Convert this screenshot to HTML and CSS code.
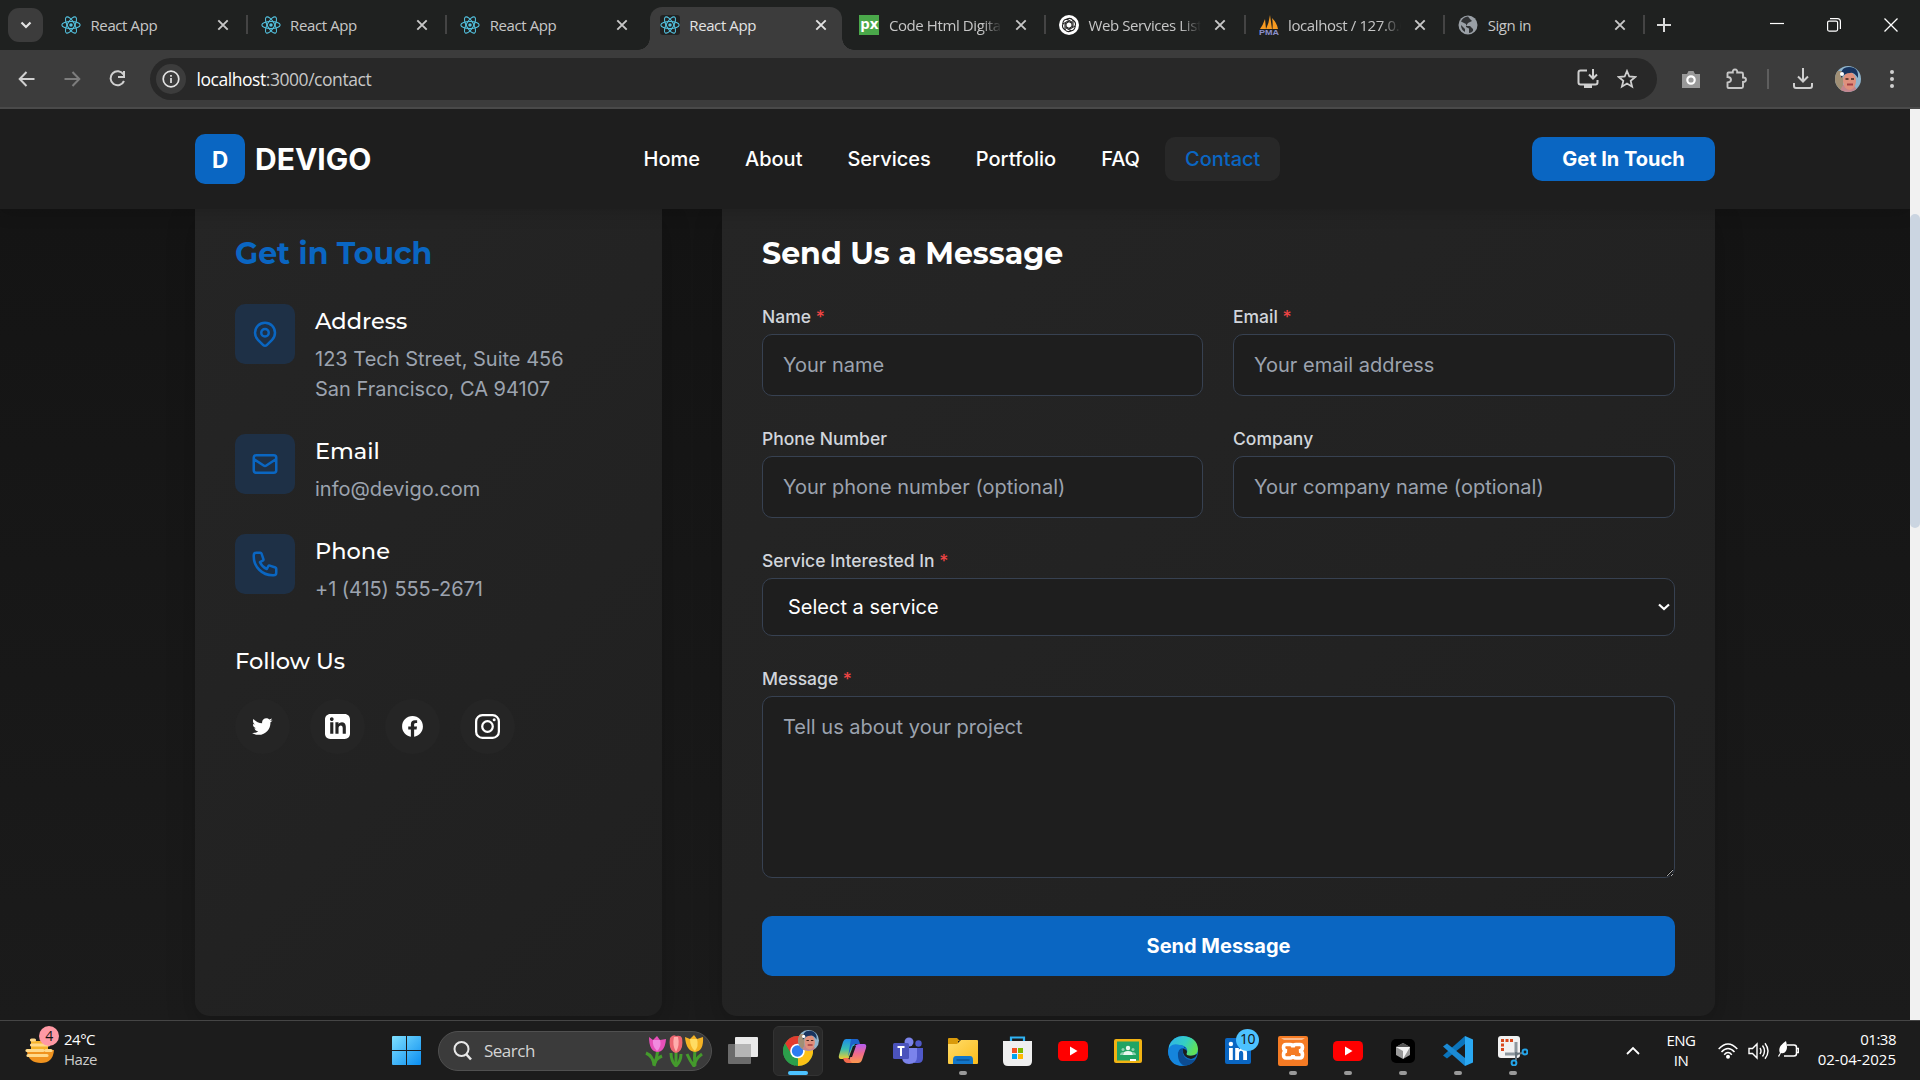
FILE: index.html
```html
<!DOCTYPE html>
<html lang="en">
<head>
<meta charset="utf-8">
<title>Devigo - Contact</title>
<link rel="stylesheet" href="styles.css">
</head>
<body>
<svg class="defs" width="0" height="0">
  <defs>
    <symbol id="react" viewBox="-12 -12 24 24"><g fill="none" stroke="#53c1de" stroke-width="1.3"><ellipse rx="11" ry="4.3"/><ellipse rx="11" ry="4.3" transform="rotate(60)"/><ellipse rx="11" ry="4.3" transform="rotate(120)"/></g><circle r="2.1" fill="#53c1de"/></symbol>
    <symbol id="close" viewBox="0 0 12 12"><path d="M1.3 1.3l9.4 9.4M10.7 1.3l-9.4 9.4" stroke="currentColor" stroke-width="1.9" fill="none"/></symbol>
    <symbol id="youtube" viewBox="0 0 30 20"><rect width="30" height="20" rx="4.5" fill="#f00"/><path d="M12 5.5v9l7.500-4.500z" fill="#fff"/></symbol>
    <linearGradient id="win" x1="0" y1="0" x2="1" y2="1"><stop offset="0" stop-color="#7fe0ff"/><stop offset="1" stop-color="#0a8df0"/></linearGradient>
    <linearGradient id="folder" x1="0" y1="0" x2="1" y2="1"><stop offset="0" stop-color="#ffdc6a"/><stop offset="1" stop-color="#fbbc1b"/></linearGradient>
    <linearGradient id="edgeTop" x1="0" y1="0" x2="1" y2=".4"><stop offset="0" stop-color="#2fb1ee"/><stop offset=".6" stop-color="#35cfc2"/><stop offset="1" stop-color="#5fe05a"/></linearGradient>
    <linearGradient id="copA" x1="0" y1="0" x2="0" y2="1"><stop offset="0" stop-color="#1d8bea"/><stop offset=".5" stop-color="#37bdb1"/><stop offset="1" stop-color="#f2cf2d"/></linearGradient>
    <linearGradient id="copB" x1="0" y1="0" x2="0" y2="1"><stop offset="0" stop-color="#b45cf2"/><stop offset=".5" stop-color="#f06a8c"/><stop offset="1" stop-color="#fb9a4c"/></linearGradient>
    <symbol id="face" viewBox="0 0 26 26"><clipPath id="fc"><circle cx="13" cy="13" r="13"/></clipPath><g clip-path="url(#fc)"><rect width="26" height="26" fill="#8fb4cc"/><path d="M0 5h8v21H0z" fill="#a08f75"/><path d="M5 26q2-9 8-9t10 9z" fill="#c4868e"/><ellipse cx="14.500" cy="15" rx="6.500" ry="9" fill="#e0907c"/><path d="M6 12Q5 1 14 1q10 0 9 11-4-6-8-5-5 0-9 5z" fill="#18345f"/><path d="M10.500 13h3M16 13h3" stroke="#40251f" stroke-width="1.500"/><path d="M12 18.500h6" stroke="#a33e42" stroke-width="2"/><circle cx="7" cy="8" r="2" fill="#fff"/></g></symbol>
  </defs>
</svg>

<div class="tabstrip">
  <button class="tab-search"><svg width="12" height="8" viewBox="0 0 12 8"><path d="M1.500 1.500L6 6l4.500-4.500" fill="none" stroke="#e3e3e3" stroke-width="2.200"/></svg></button>
  <div class="tabs">
    <div class="tab"><svg class="fav"><use href="#react"/></svg><span class="tab-title">React App</span><svg class="x"><use href="#close"/></svg></div>
    <div class="tab"><svg class="fav"><use href="#react"/></svg><span class="tab-title">React App</span><svg class="x"><use href="#close"/></svg></div>
    <div class="tab no-sep"><svg class="fav"><use href="#react"/></svg><span class="tab-title">React App</span><svg class="x"><use href="#close"/></svg></div>
    <div class="tab active"><svg class="fav fav-dark"><use href="#react"/></svg><span class="tab-title">React App</span><svg class="x"><use href="#close"/></svg></div>
    <div class="tab"><span class="fav px">px</span><span class="tab-title fade">Code Html Digital</span><svg class="x"><use href="#close"/></svg></div>
    <div class="tab"><svg class="fav" viewBox="-10 -10 20 20"><circle r="10" fill="#fff"/><g fill="none" stroke="#222" stroke-width="1.100"><path id="pt" d="M-2.500-5.800Q2-8 4-4.500V1L0 3.500"/><use href="#pt" transform="rotate(60)"/><use href="#pt" transform="rotate(120)"/><use href="#pt" transform="rotate(180)"/><use href="#pt" transform="rotate(240)"/><use href="#pt" transform="rotate(300)"/></g></svg><span class="tab-title fade">Web Services List</span><svg class="x"><use href="#close"/></svg></div>
    <div class="tab"><svg class="fav" viewBox="0 0 20 20"><path d="M1 14Q4 10 6 4l1 10zM7 14Q10 8 11 0l2 14zM13.500 14Q14 7 13 3q5 5 6 11z" fill="#f79a20"/><text x="0" y="20" font-size="7.500" font-weight="700" textLength="20" lengthAdjust="spacingAndGlyphs" fill="#8b8fc9" font-family="Liberation Sans, sans-serif">PMA</text></svg><span class="tab-title fade">localhost / 127.0.0.1</span><svg class="x"><use href="#close"/></svg></div>
    <div class="tab"><svg class="fav" viewBox="0 0 20 20"><circle cx="10" cy="10" r="9.500" fill="#9aa0a6"/><path d="M10 1.500Q5 2 3 6.500l5 2.500v3l3 1.500V18q5-1 4-4l-3-3H8l2-3 4-2-2-2z" fill="#303234"/><path d="M3 10l4 4v3q-4-2-4-7z" fill="#303234"/></svg><span class="tab-title">Sign in</span><svg class="x"><use href="#close"/></svg></div>
  </div>
  <svg class="plus" width="14" height="14" viewBox="0 0 14 14"><path d="M7 0v14M0 7h14" stroke="#dadada" stroke-width="2"/></svg>
  <div class="window-buttons">
    <svg width="14" height="16" viewBox="0 0 14 16"><path d="M0 6.500h14" stroke="#fff" stroke-width="1.200"/></svg>
    <svg width="14" height="14" viewBox="0 0 14 14"><rect x=".6" y="3.100" width="10" height="10" rx="1.500" fill="none" stroke="#fff" stroke-width="1.200"/><path d="M3 .6h7.400q3 0 3 3V11" fill="none" stroke="#fff" stroke-width="1.200"/></svg>
    <svg width="14" height="14" viewBox="0 0 14 14"><path d="M.5.5l13 13M13.500.5l-13 13" stroke="#fff" stroke-width="1.300"/></svg>
  </div>
</div>

<div class="toolbar">
  <div class="nav-buttons">
    <svg width="20" height="20" viewBox="0 0 20 20"><path d="M17.500 10H3M9.500 3L2.700 10l6.800 7" fill="none" stroke="#d0d0d0" stroke-width="2"/></svg>
    <svg width="20" height="20" viewBox="0 0 20 20"><path d="M2.500 10H17M10.500 3l6.800 7-6.800 7" fill="none" stroke="#7d7d7d" stroke-width="2"/></svg>
    <svg width="20" height="20" viewBox="0 0 20 20"><path d="M16.500 5.500A7 7 0 1 0 17 12" fill="none" stroke="#d0d0d0" stroke-width="2"/><path d="M17 2v6h-6" fill="none" stroke="#d0d0d0" stroke-width="2"/></svg>
  </div>
  <div class="omnibox">
    <span class="site-info"><svg width="18" height="18" viewBox="0 0 18 18"><circle cx="9" cy="9" r="7.800" fill="none" stroke="#e3e3e3" stroke-width="1.700"/><path d="M9 8v5M9 5v1.700" stroke="#e3e3e3" stroke-width="1.700"/></svg></span>
    <span class="url"><b>localhost</b>:3000/contact</span>
    <svg width="22" height="20" viewBox="0 0 22 20"><path d="M10 1.500H3.500Q1.500 1.500 1.500 3.500v10q0 2 2 2h15q2 0 2-2V11M16 0v9M12 5.500l4 4 4-4" fill="none" stroke="#cfcfcf" stroke-width="2"/><path d="M7 16h8v3H7z" fill="#cfcfcf"/></svg>
    <svg width="20" height="20" viewBox="0 0 20 20"><path d="M10 2l2.300 5.500 5.900.5-4.500 3.900 1.400 5.800L10 14.600l-5.100 3.100 1.400-5.800L1.800 8l5.900-.5z" fill="none" stroke="#cfcfcf" stroke-width="1.800"/></svg>
  </div>
  <div class="extensions">
    <svg class="cam" width="20" height="18" viewBox="0 0 20 18"><path d="M1 4h5l1.500-3h5L14 4h5v14H1z" fill="#999"/><circle cx="10" cy="10" r="3.700" fill="none" stroke="#fff" stroke-width="2.200"/></svg>
    <svg class="puzzle" width="22" height="22" viewBox="0 0 22 22"><path d="M3.500 4.500h4.300q-.3-3 2.200-3t2.200 3h4.300q1.500 0 1.500 1.500v3.500q3 0 3 2.200t-3 2.300v4.500q0 1.500-1.500 1.500h-13q-1 0-1-1v-4.500q3.500-.3 3.500-2.800T2.500 9V5.500q0-1 1-1z" fill="none" stroke="#c7c7c7" stroke-width="1.900"/></svg>
    <i></i>
    <svg class="dl" width="20" height="21" viewBox="0 0 20 21"><path d="M10 0v13M5 8.500l5 5 5-5M1 15v3q0 2 2 2h14q2 0 2-2v-3" fill="none" stroke="#cfcfcf" stroke-width="2"/></svg>
    <svg class="avatar" width="26" height="26"><use href="#face"/></svg>
    <svg class="dots" width="4" height="18" viewBox="0 0 4 18"><g fill="#cfcfcf"><circle cx="2" cy="2" r="2"/><circle cx="2" cy="9" r="2"/><circle cx="2" cy="16" r="2"/></g></svg>
  </div>
</div>

<div class="viewport">
  <div class="site">
    <header class="site-header">
      <div class="container header-row">
        <div class="brand"><span class="brand-mark">D</span><span class="brand-name">DEVIGO</span></div>
        <nav><a>Home</a><a>About</a><a>Services</a><a>Portfolio</a><a>FAQ</a><a class="current">Contact</a></nav>
        <button class="cta">Get In Touch</button>
      </div>
    </header>
    <main class="container columns">
      <section class="card info">
        <h2 class="blue">Get in Touch</h2>
        <div class="contact-item"><span class="icon-box"><svg viewBox="0 0 24 24"><path d="M17.657 16.657L13.414 20.900a1.998 1.998 0 01-2.827 0l-4.244-4.243a8 8 0 1111.314 0z"/><path d="M15 11a3 3 0 11-6 0 3 3 0 016 0z"/></svg></span><div><h3>Address</h3><p>123 Tech Street, Suite 456<br>San Francisco, CA 94107</p></div></div>
        <div class="contact-item"><span class="icon-box"><svg viewBox="0 0 24 24"><path d="M3 8l7.890 5.260a2 2 0 002.220 0L21 8M5 19h14a2 2 0 002-2V7a2 2 0 00-2-2H5a2 2 0 00-2 2v10a2 2 0 002 2z"/></svg></span><div><h3>Email</h3><p>info@devigo.com</p></div></div>
        <div class="contact-item"><span class="icon-box"><svg viewBox="0 0 24 24"><path d="M3 5a2 2 0 012-2h3.280a1 1 0 01.948.684l1.498 4.493a1 1 0 01-.502 1.210l-2.257 1.130a11.042 11.042 0 005.516 5.516l1.130-2.257a1 1 0 011.210-.502l4.493 1.498a1 1 0 01.684.949V19a2 2 0 01-2 2h-1C9.716 21 3 14.284 3 6V5z"/></svg></span><div><h3>Phone</h3><p class="tel">+1 (415) 555-2671</p></div></div>
        <h3 class="follow">Follow Us</h3>
        <div class="social">
          <a><svg viewBox="0 0 24 24"><path d="M19.633 7.997c.013.175.013.349.013.523 0 5.325-4.053 11.461-11.460 11.461-2.282 0-4.402-.661-6.186-1.809.324.037.636.05.973.05a8.070 8.070 0 0 0 5.001-1.721 4.036 4.036 0 0 1-3.767-2.793c.249.037.499.062.761.062.361 0 .724-.05 1.061-.137a4.027 4.027 0 0 1-3.230-3.953v-.05c.537.299 1.160.486 1.820.511a4.022 4.022 0 0 1-1.796-3.354c0-.748.199-1.434.548-2.032a11.457 11.457 0 0 0 8.306 4.215c-.062-.3-.1-.611-.1-.923a4.026 4.026 0 0 1 4.028-4.028c1.160 0 2.207.486 2.943 1.272a7.957 7.957 0 0 0 2.556-.973 4.020 4.020 0 0 1-1.771 2.220 8.073 8.073 0 0 0 2.319-.624 8.645 8.645 0 0 1-2.019 2.083z"/></svg></a>
          <a><svg viewBox="0 0 24 24"><path d="M19 0h-14c-2.761 0-5 2.239-5 5v14c0 2.761 2.239 5 5 5h14c2.762 0 5-2.239 5-5v-14c0-2.761-2.238-5-5-5zm-11 19h-3v-11h3v11zm-1.500-12.268c-.966 0-1.750-.79-1.750-1.764s.784-1.764 1.750-1.764 1.750.79 1.750 1.764-.783 1.764-1.750 1.764zm13.500 12.268h-3v-5.604c0-3.368-4-3.113-4 0v5.604h-3v-11h3v1.765c1.396-2.586 7-2.777 7 2.476v6.759z"/></svg></a>
          <a><svg viewBox="0 0 24 24"><path d="M12.001 2.002c-5.522 0-9.999 4.477-9.999 9.999 0 4.990 3.656 9.126 8.437 9.879v-6.988h-2.540v-2.891h2.540V9.798c0-2.508 1.493-3.891 3.776-3.891 1.094 0 2.240.195 2.240.195v2.459h-1.264c-1.240 0-1.628.772-1.628 1.563v1.875h2.771l-.443 2.891h-2.328v6.988C18.344 21.129 22 16.992 22 12.001c0-5.522-4.477-9.999-9.999-9.999z"/></svg></a>
          <a><svg viewBox="0 0 24 24"><rect x="1.080" y="1.080" width="21.840" height="21.840" rx="6" fill="none" stroke="#fff" stroke-width="2.160"/><circle cx="12" cy="12" r="5.080" fill="none" stroke="#fff" stroke-width="2.160"/><circle cx="18.400" cy="5.600" r="1.440"/></svg></a>
        </div>
      </section>
      <section class="card message">
        <h2>Send Us a Message</h2>
        <form>
          <div class="field"><label>Name <em>*</em></label><input placeholder="Your name"></div>
          <div class="field"><label>Email <em>*</em></label><input placeholder="Your email address"></div>
          <div class="field"><label>Phone Number</label><input placeholder="Your phone number (optional)"></div>
          <div class="field"><label>Company</label><input placeholder="Your company name (optional)"></div>
          <div class="field wide"><label>Service Interested In <em>*</em></label><div class="select"><span>Select a service</span><svg width="12" height="8" viewBox="0 0 12 8"><path d="M1 1.500l5 4.500 5-4.500" fill="none" stroke="#fff" stroke-width="2.200"/></svg></div></div>
          <div class="field wide last"><label>Message <em>*</em></label><textarea placeholder="Tell us about your project"></textarea></div>
          <button type="button" class="wide submit">Send Message</button>
        </form>
      </section>
    </main>
  </div>
  <div class="scrollbar"><div class="thumb"></div></div>
</div>

<div class="taskbar">
  <div class="weather">
    <svg width="34" height="38" viewBox="0 0 34 38"><path d="M3 22h27q-1 13-13 13T3 24z" fill="#f0931f"/><path d="M7 13h17v9H7z" fill="#f5b32c"/><g stroke="#ffd98a" stroke-width="3.200" stroke-linecap="round"><path d="M7.500 12h3M7.500 17h17M3 22.500h16M22 22.500h5M4 27.500h19"/></g><circle cx="25" cy="8" r="10" fill="#ff99a4"/><text x="25" y="13" text-anchor="middle" font-size="14" fill="#111" font-family="Open Sans, sans-serif">4</text></svg>
    <div><span>24°C</span><span class="dim">Haze</span></div>
  </div>
  <svg class="start" width="29" height="29" viewBox="0 0 29 29"><path d="M1 0h13v14H0V1q0-1 1-1zM15 0h13q1 0 1 1v13H15zM0 15h14v14H1q-1 0-1-1zM15 15h14v13q0 1-1 1H15z" fill="url(#win)"/></svg>
  <div class="search">
    <svg width="20" height="20" viewBox="0 0 20 20"><circle cx="8.500" cy="8" r="7" fill="none" stroke="#e8e8e8" stroke-width="2"/><path d="M13.500 13.500L18 18.500" stroke="#e8e8e8" stroke-width="2.600"/></svg>
    <span>Search</span>
    <svg width="60" height="32" viewBox="0 0 60 32"><g fill="none" stroke="#449a2c" stroke-width="3"><path d="M13 14q-1 9-4 17M31 14v17M50 14q-1 9 0 17"/><path d="M1 18q7 3 8 12 1-6 8-9M26 18q0 8 5 13 5-5 5-12M42 19q3 7 7 12 1-7 8-12"/></g><path d="M4 2l4 3 4-4 3 4 6-1q-1 13-9 13Q4 16 4 2z" fill="#e650b8"/><path d="M8 5q-1 6 4 11 5-4 3-11" fill="#f28be0"/><path d="M25 3q3-4 6-2 5-1 6 2 2 13-6 15-8-2-6-15z" fill="#ec6670"/><path d="M29 2q-2 8 2 15 4-7 2-15" fill="#ffadac"/><path d="M40 2l5 2 4-4 3 4 6-2q1 14-8 15-9-1-10-15z" fill="#f5b325"/><path d="M45 4q0 8 5 12 4-5 2-12" fill="#ffdc63"/></svg>
  </div>
  <div class="apps">
    <span><svg viewBox="0 0 30 30"><rect x="0" y="8" width="23" height="20" rx="1" fill="#6b6b6b"/><rect x="7" y="1" width="23" height="20" rx="1" fill="#e9e9e9"/><path d="M7 8h16v13H7z" fill="#b5b5b5"/></svg></span>
    <span class="open focus"><svg viewBox="0 0 30 30"><circle cx="15" cy="15" r="15" fill="#2c9e4b"/><path d="M15 15L2 7.500A15 15 0 0 1 28 7.500z" fill="#e33b2e"/><path d="M15 15L28 7.500A15 15 0 0 1 15 30z" fill="#fbc116"/><path d="M2 7.500L9 19l6-4z" fill="#2c9e4b"/><path d="M2 7.500L8 18 15 15V7z" fill="#e33b2e"/><path d="M2 7.500l7 11.500L15 22 12 29.700A15 15 0 0 1 2 7.500z" fill="#2c9e4b"/><circle cx="14.500" cy="15" r="7.300" fill="#fff"/><circle cx="14.500" cy="15" r="5.700" fill="#2e7cf0"/></svg><svg class="mini"><use href="#face"/></svg></span>
    <span><svg viewBox="0 0 30 30"><path d="M8 3h11L12 20q-1 3-4 3H3q-3 0-2-4L5 6q1-3 3-3z" fill="url(#copA)"/><path d="M13 3h6q2 0 3 5h-5q-3 0-4 4l-3 9z" fill="#1c63cc"/><path d="M22 8h4q3 0 2 4l-4 12q-1 3-4 3H10l6-15q1-4 6-4z" fill="url(#copB)"/><path d="M1 22h9l4 5h-4q-4 0-5-5z" fill="#f26b4d"/><path d="M15 10l-4 11h3l4-11z" fill="#1c1c1c"/></svg></span>
    <span><svg viewBox="0 0 30 30"><circle cx="16" cy="6" r="4.500" fill="#7b83eb"/><circle cx="25.500" cy="7.500" r="3.200" fill="#5059c9"/><path d="M20 12h10v10q0 5-5 5h-4z" fill="#5059c9"/><path d="M9 12h15v9q0 7-8 7-7 0-7-7z" fill="#7b83eb"/><rect x="0" y="7" width="16" height="16" rx="1.500" fill="#4b53bc"/><path d="M4.500 11h7M8 11v9" stroke="#fff" stroke-width="2"/></svg></span>
    <span class="open"><svg viewBox="0 0 30 30"><path d="M0 3q0-1 1-1h8l3 3h-2v8H0z" fill="#d99a0b"/><path d="M0 8h9l4-4h16q1 0 1 1v22q0 1-1 1H1q-1 0-1-1z" fill="url(#folder)"/><path d="M5 28v-4q0-4 3-4h14q3 0 3 4v4z" fill="#1276c9"/><path d="M8.500 24h13" stroke="#0b4a86" stroke-width="1.200"/></svg></span>
    <span><svg viewBox="0 0 30 30"><path d="M8 6V1.500h13V6" fill="none" stroke="#2fb2f2" stroke-width="2.200"/><path d="M0 5h29v20q0 5-5 5H5q-5 0-5-5z" fill="#efefef"/><path d="M9 12h5v5H9z" fill="#f25022"/><path d="M15 12h5v5h-5z" fill="#7fba00"/><path d="M9 18h5v5H9z" fill="#00a4ef"/><path d="M15 18h5v5h-5z" fill="#ffb900"/></svg></span>
    <span><svg><use href="#youtube"/></svg></span>
    <span><svg viewBox="0 0 30 30"><rect x="1" y="3" width="28" height="24" rx="2" fill="#f2b313"/><rect x="4" y="5.500" width="22" height="19" fill="#21a464"/><g fill="#e8f6ee"><circle cx="15" cy="12" r="2.200"/><path d="M10 19q0-4 5-4t5 4z"/></g><g fill="#8fd1b1"><circle cx="10" cy="13.500" r="1.500"/><circle cx="20" cy="13.500" r="1.500"/><path d="M7 19q0-3 4-3l-1 3zM23 19q0-3-4-3l1 3z"/></g><path d="M17 23h6v2h-6z" fill="#fff"/></svg></span>
    <span><svg viewBox="0 0 30 30"><circle cx="15" cy="15" r="15" fill="#0f6fc4"/><path d="M1 10Q5 0 15 0q14 1 15 13 0 7-8 7-5 0-4-2 2-2 1-5-2-4-8-4-7 0-10 5z" fill="url(#edgeTop)"/><path d="M10 17q1-7 8-6-4 2-3 7 2 6 9 6 3 0 4-1-5 8-13 6-6-4-5-12z" fill="#0c4c92"/><path d="M15 13q4 0 4 3-1 2 0 3 5 2 10-1-1 4-6 5-9-2-8-10z" fill="#1c1c1c"/><path d="M0 15q2-9 12-6 5 1 4 3-7 0-6 8 0 6 5 10Q1 30 0 15z" fill="#1585dc"/></svg></span>
    <span class="linkedin"><svg viewBox="0 0 30 30"><rect x="2" y="2" width="26" height="26" rx="2" fill="#0a66c2"/><path d="M6 12h3.800v12H6zM12.200 12h3.600v1.700Q17 11.700 19.700 11.700q4.300 0 4.300 5.300v7h-3.800v-6.500q0-2.700-2-2.700-2.200 0-2.200 2.900V24h-3.800z" fill="#fff"/><circle cx="7.900" cy="8" r="2.200" fill="#fff"/></svg><b>10</b></span>
    <span class="open"><svg viewBox="0 0 30 30"><rect width="30" height="30" rx="2" fill="#f57b24"/><path d="M3 2h24l-3 2H6z" fill="#fbb98a"/><path d="M8 8.500h4q3 0 3 3 0-3 3-3h4q2.500 0 2.500 3T21 15q3.500 0 3.500 3.500t-2.500 3.500h-4q-3 0-3-3 0 3-3 3H8q-2.500 0-2.500-3.500T9 15q-3.500-.5-3.500-3.500t2.500-3z" fill="none" stroke="#fff" stroke-width="3.600"/></svg></span>
    <span class="open"><svg><use href="#youtube"/></svg></span>
    <span class="open"><svg viewBox="0 0 30 30"><rect x="3" y="3" width="24" height="24" rx="5" fill="#000"/><path d="M15 7l7 4v8l-7 4-7-4v-8z" fill="#999"/><path d="M8 11h14l-7 12v-8z" fill="#f4f4f4"/><path d="M15 7l7 4H8z" fill="#555"/></svg></span>
    <span class="open"><svg viewBox="0 0 30 30"><path d="M22 0l8 3.500v23L22 30z" fill="#2aa8f2"/><path d="M22 0v8L4 22.500 0 19.500z" fill="#0b74bb"/><path d="M22 30v-8L4 7.500 0 10.500z" fill="#1b8ad4"/></svg></span>
    <span class="open"><svg viewBox="0 0 30 30"><rect x="0" y="0" width="22" height="22" rx="3" fill="#f1f1f1"/><path d="M4.500 15V4.500H15" fill="none" stroke="#d9481c" stroke-width="3" stroke-dasharray="3 1.500"/><path d="M18 6v12M7 18h13" stroke="#8d979e" stroke-width="3"/><path d="M18 16v8M18 18l7-1" stroke="#68747c" stroke-width="2"/><g fill="none" stroke="#24a4e8" stroke-width="2"><circle cx="27" cy="16" r="2.400"/><circle cx="16" cy="27" r="2.400"/></g></svg></span>
  </div>
  <div class="tray">
    <svg class="chev" width="14" height="9" viewBox="0 0 14 9"><path d="M1 8l6-6 6 6" fill="none" stroke="#fff" stroke-width="1.800"/></svg>
    <div class="lang"><span>ENG</span><span>IN</span></div>
    <svg class="wifi" width="20" height="16" viewBox="0 0 20 16"><g fill="none" stroke="#fff" stroke-width="1.500"><path d="M.7 6Q10-3.800 19.300 6"/><path d="M3.500 9Q10 2 16.500 9"/><path d="M6.200 11.700Q10 7.500 13.800 11.700"/></g><circle cx="10" cy="13.700" r="2" fill="#fff"/></svg>
    <svg class="vol" width="21" height="18" viewBox="0 0 21 18"><path d="M1 6.500h3.500L9 2v14l-4.500-4.500H1zM12 6q2 3 0 6M14.500 3.500q4 5.500 0 11M17 1.200q6 7.800 0 15.600" fill="none" stroke="#fff" stroke-width="1.400"/></svg>
    <svg class="bat" width="21" height="18" viewBox="0 0 21 18"><path d="M9 4h7q2.500 0 2.500 2.500v6q0 2.500-2.500 2.500H6M18.500 7.500h2v4h-2" fill="none" stroke="#fff" stroke-width="1.500"/><path d="M8 0q2 7 0 10-2 3-5 2l-2 4-1-1 2-3Q-1 6 8 0z" fill="#fff"/></svg>
    <div class="clock"><span>01:38</span><span class="date">02-04-2025</span></div>
  </div>
</div>
</body>
</html>
```
FILE: styles.css
```css
* { box-sizing: border-box; }
body {
  margin: 0;
  width: 1920px;
  height: 1080px;
  overflow: hidden;
  display: flex;
  flex-direction: column;
  background: #1c1c1c;
  font-family: Inter, sans-serif;
  color: #fff;
}
svg { display: block; flex: none; }
.defs { position: absolute; }
button { border: 0; font: inherit; color: inherit; padding: 0; }

/* Browser tab strip */
.tabstrip {
  flex: none;
  height: 50px;
  display: flex;
  align-items: center;
  background: #1f2120;
  font: 15px "Open Sans", sans-serif;
  color: #c7c7c7;
}
.tab-search {
  width: 35px;
  height: 34px;
  margin-left: 8px;
  border-radius: 11px;
  background: #3c3c3c;
  display: grid;
  place-items: center;
}
.tabs { display: flex; height: 50px; margin-left: 4px; }
.tab {
  width: 199.600px;
  height: 50px;
  padding: 0 17px 0 14px;
  display: flex;
  align-items: center;
  position: relative;
}
.tab::after {
  content: "";
  position: absolute;
  right: -1px;
  top: 15px;
  width: 2px;
  height: 19px;
  background: #444;
}
.no-sep::after { display: none; }
.active { color: #e3e3e3; }
.active::before {
  content: "";
  position: absolute;
  left: 4px;
  top: 7px;
  width: 192px;
  height: 43px;
  background: #3c3c3c;
  border-radius: 12px 12px 0 0;
}
/* Curved feet where the active tab meets the toolbar */
.active::after {
  left: -8px;
  right: auto;
  top: 38px;
  width: 216px;
  height: 12px;
  background:
    radial-gradient(circle at 0 0, transparent 11.5px, #3c3c3c 12px) left / 12px 12px no-repeat,
    radial-gradient(circle at 12px 0, transparent 11.5px, #3c3c3c 12px) right / 12px 12px no-repeat;
}
.active > * { position: relative; }
.fav { width: 20px; height: 20px; flex: none; }
.fav-dark { background: #222; border-radius: 3px; }
.px { background: #4aa84a; color: #fff; font: 700 15px/17px "Open Sans", sans-serif; text-align: center; }
.tab-title {
  width: 113px;
  margin: 0 13px 1px 9.500px;
  white-space: nowrap;
  overflow: hidden;
  letter-spacing: -.4px;
}
.fade { -webkit-mask-image: linear-gradient(to right, #000 82%, transparent); mask-image: linear-gradient(to right, #000 82%, transparent); }
.x { width: 12px; height: 12px; }
.plus { margin-left: 13px; }
.window-buttons { margin-left: auto; margin-right: 22px; display: flex; gap: 43px; align-items: center; }

/* Browser toolbar */
.toolbar {
  flex: none;
  height: 59px;
  display: flex;
  align-items: center;
  background: #3c3c3c;
  border-bottom: 2px solid #4a4a4a;
}
.nav-buttons { display: flex; gap: 25px; margin-left: 17px; }
.omnibox {
  width: 1507px;
  height: 42px;
  margin-left: 23px;
  padding: 0 20px 0 6px;
  border-radius: 21px;
  background: #282828;
  display: flex;
  align-items: center;
  gap: 18px;
}
.site-info {
  width: 30px;
  height: 30px;
  border-radius: 50%;
  background: #3c3c3c;
  display: grid;
  place-items: center;
}
.url { flex: 1; margin-left: -7.500px; font: 17.500px "Open Sans", sans-serif; color: #c7c7c7; letter-spacing: -.45px; }
.url b { font-weight: 400; color: #fff; }
.extensions { display: flex; align-items: center; margin-left: 24px; }
.extensions i { width: 2px; height: 20px; background: #5e5e5e; margin: 0 24px 0 20px; }
.puzzle { margin-left: 24px; }
.avatar { margin-left: 22px; }
.dots { margin-left: 29px; }

/* Page */
.viewport { height: 911px; flex: none; display: flex; }
.site {
  width: 1910px;
  overflow: hidden;
  background: linear-gradient(#131313, #1b1b1b);
}
.scrollbar { width: 10px; background: #f1f1f1; padding-top: 105px; }
.thumb { height: 314px; border-radius: 5px; background: #cbd5e1; }
.container { width: 1520px; margin: 0 auto; }
.site-header {
  height: 100px;
  position: relative;
  background: #1e1e1e;
  box-shadow: 0 4px 16px rgba(0, 0, 0, .15);
}
.header-row { height: 100px; display: flex; align-items: center; }
.brand { display: flex; align-items: center; gap: 10px; width: 428.500px; font-weight: 700; }
.brand-mark {
  width: 50px;
  height: 50px;
  border-radius: 10px;
  background: #0a66c2;
  display: grid;
  place-items: center;
  font-size: 22.500px;
}
.brand-name { font-size: 30px; letter-spacing: 0; }
nav { display: flex; gap: 5px; font-size: 20px; font-weight: 500; }
nav a { padding: 0 20px; height: 44px; line-height: 44px; border-radius: 10px; }
nav .current { background: #282828; color: #0a66c2; }
.cta {
  width: 183px;
  height: 44px;
  margin-left: auto;
  border-radius: 10px;
  background: #0a66c2;
  font-size: 20px;
  font-weight: 650;
}

.columns { display: flex; gap: 60px; align-items: stretch; height: 807px; }
.card { background: linear-gradient(135deg, #252525, #202020); border-radius: 0 0 15px 15px; padding: 22px 40px 40px; box-shadow: 0 10px 30px rgba(0, 0, 0, .2); }
.info { width: 467px; }
.message { width: 993px; }
h2, h3 { font-family: Montserrat, Inter, sans-serif; }
h2 { margin: 0; height: 46px; font-size: 30px; line-height: 46px; font-weight: 700; }
.blue { color: #0a66c2; margin-bottom: 27px; }
h3 { margin: 0; font-size: 22.500px; line-height: 35px; font-weight: 500; }
.contact-item { display: flex; gap: 20px; margin-bottom: 30px; }
.contact-item p { margin: 5px 0 0; font-size: 20px; line-height: 30px; color: #9ca3af; }
.contact-item .tel { letter-spacing: -.07px; }
.icon-box {
  width: 60px;
  height: 60px;
  border-radius: 10px;
  background: #1e3046;
  display: grid;
  place-items: center;
}
.icon-box svg { width: 30px; height: 30px; fill: none; stroke: #0a66c2; stroke-width: 2; stroke-linecap: round; stroke-linejoin: round; }
.follow { margin-top: 40px; margin-bottom: 20px; }
.social { display: flex; gap: 20px; }
.social a { width: 55px; height: 55px; border-radius: 50%; background: #252525; display: grid; place-items: center; }
.social svg { width: 25px; height: 25px; fill: #fff; }

form { display: grid; grid-template-columns: 441px 442px; column-gap: 30px; margin-top: 23px; }
.wide { grid-column: 1 / 3; }
.field { display: flex; flex-direction: column; margin-bottom: 26px; }
.last { margin-bottom: 38px; }
label { height: 34px; font-size: 17.500px; line-height: 33px; font-weight: 500; color: #d1d5db; }
label em { font-style: normal; color: #ef4444; }
input, .select, textarea {
  display: block;
  width: 100%;
  margin: 0;
  border: 1px solid #374151;
  border-radius: 10px;
  background: #1e1e1e;
  color: #fff;
  font: 20px/30px Inter, sans-serif;
  padding: 0 20px;
  outline: 0;
}
input { height: 62px; }
::placeholder { color: #9ca3af; opacity: 1; }
.select { height: 58px; display: flex; align-items: center; justify-content: space-between; padding: 0 4px 0 25px; }
textarea { height: 182px; padding-top: 15px; resize: vertical; }
.submit { height: 60px; border-radius: 10px; background: #0a66c2; font-size: 20px; font-weight: 650; }

/* Taskbar */
.taskbar {
  flex: none;
  height: 60px;
  border-top: 1px solid #454545;
  background: #1c1c1c;
  display: flex;
  align-items: center;
  font: 15px/20px "Open Sans", sans-serif;
  letter-spacing: -.5px;
}
.weather { display: flex; flex: none; width: 392px; padding-left: 24px; gap: 6px; }
.weather > svg { margin-top: -4px; overflow: visible; }
.weather > div { margin-top: -3px; }
.weather span, .lang span, .clock span { display: block; }
.dim { color: #ccc; }
.start { margin-right: 17px; }
.search {
  flex: none;
  width: 274px;
  height: 40px;
  border: 1px solid #505050;
  border-radius: 20px;
  background: #3b3b3b;
  display: flex;
  align-items: center;
  padding: 0 6px 0 14px;
  font-size: 17px;
  color: #d4d4d4;
}
.search span { margin-left: 11px; flex: 1; }
.apps { display: flex; flex: none; margin-left: 3px; }
.apps > span { width: 55px; height: 50px; display: grid; place-items: center; position: relative; }
.apps svg { width: 30px; height: 30px; }
.open::after {
  content: "";
  position: absolute;
  left: 24px;
  bottom: 1px;
  width: 8px;
  height: 4px;
  border-radius: 2px;
  background: #999;
}
.focus::before {
  content: "";
  position: absolute;
  inset: 0 2.500px;
  border: 1px solid #333;
  border-radius: 6px;
  background: #292929;
}
.focus svg { position: relative; }
.focus::after { left: 18px; width: 20px; background: #4cc2ff; }
.apps .mini { position: absolute; left: 28px; top: 4px; width: 21px; height: 21px; }
.linkedin b {
  position: absolute;
  left: 26px;
  top: 3px;
  width: 23px;
  height: 22px;
  border-radius: 50%;
  background: #4cc2ff;
  color: #111;
  font-weight: 400;
  font-size: 14px;
  text-align: center;
}
.tray { flex: none; margin-left: auto; padding-right: 24px; display: flex; align-items: center; }
.lang { width: 40px; margin: -2px 17px 0 21px; text-align: center; }
.vol { margin: 0 9px 0 10px; }
.bat { margin-top: -2px; }
.clock { width: 84px; margin: -4px 0 0 13px; text-align: right; white-space: nowrap; }
.date { letter-spacing: 0; margin-left: -6px; }
```
